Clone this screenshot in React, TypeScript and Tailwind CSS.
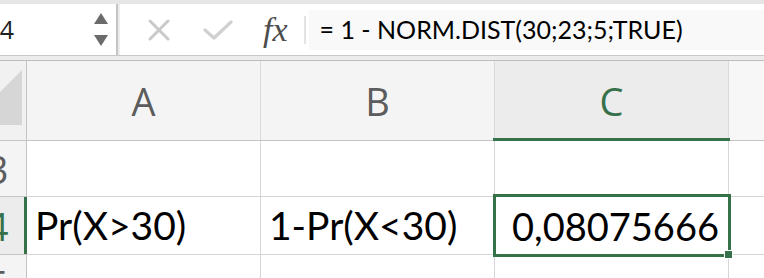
import React from "react";

const GREEN = "#37714a";

function HeaderCell({ label, active }: { label: string; active?: boolean }) {
  return (
    <div
      className={
        "relative flex h-[79px] items-center justify-center border-r border-[#dadada] " +
        (active ? "bg-[#ececec]" : "bg-[#f4f4f4]")
      }
    >
      <span
        className={"text-[38px] leading-none " + (active ? "text-[#37714a]" : "text-[#5c5c5c]")}
        style={{ fontFamily: '"Open Sans", sans-serif' }}
      >
        {label}
      </span>
      {active ? <div className="absolute bottom-[-1px] left-[-2px] right-[-2px] h-[3px] bg-[#37714a]" /> : null}
    </div>
  );
}

export default function App() {
  const cellFont = { fontFamily: 'Lato, "Open Sans", sans-serif' };
  const headFont = { fontFamily: '"Open Sans", sans-serif' };
  return (
    <div className="h-[278px] w-[764px] overflow-hidden bg-white">
      {/* top toolbar */}
      <div className="h-[4px] bg-[#e6e6e6]" />
      <div className="flex h-[51px]">
        <div className="flex w-[116px] items-center justify-between overflow-hidden bg-white">
          <span className="ml-[-16px] text-[25px] leading-none text-[#222]" style={headFont}>
            C4
          </span>
          <svg width="14" height="33" viewBox="0 0 14 33" className="mr-[8px]">
            <polygon points="7,0 14,11 0,11" fill="#6b6b6b" />
            <polygon points="0,22 14,22 7,33" fill="#6b6b6b" />
          </svg>
        </div>
        <div className="w-[2px] bg-[#c4c4c4]" />
        <div className="w-[2px] bg-[#ececec]" />
        <div className="flex flex-1 items-center bg-white pl-[28px]">
          <svg width="22" height="22" viewBox="0 0 22 22">
            <path d="M2 2 L20 20 M20 2 L2 20" stroke="#c9c9c9" strokeWidth="3" strokeLinecap="round" />
          </svg>
          <svg width="30" height="20" viewBox="0 0 30 20" className="ml-[33px]">
            <path d="M2 10 L11 18 L28 2" stroke="#d0d0d0" strokeWidth="3.2" fill="none" strokeLinecap="round" strokeLinejoin="round" />
          </svg>
          <span
            className="ml-[30px] text-[34px] italic leading-none text-[#4d4d4d]"
            style={{ fontFamily: '"Liberation Serif", serif' }}
          >
            fx
          </span>
          <div className="ml-[16px] h-[28px] w-[2px] bg-[#e3e3e3]" />
          <div className="ml-[3px] flex h-[40px] flex-1 items-center bg-[#f9f9f9] pl-[11px]">
            <span className="text-[25px] leading-none text-black" style={cellFont}>
              = 1 - NORM.DIST(30;23;5;TRUE)
            </span>
          </div>
        </div>
      </div>
      <div className="h-[1px] bg-[#c8c8c8]" />
      <div className="h-[4px] bg-[#ececec]" />
      <div className="h-[1px] bg-[#bdbdbd]" />

      {/* grid */}
      <div className="ml-[-31px] grid grid-cols-[58px_234px_234px_234px_200px]">
        {/* header row */}
        <div className="relative h-[80px] border-b border-r border-[#c4c4c4] bg-[#f1f1f1]">
          <svg width="58" height="79" viewBox="0 0 58 79" className="absolute left-0 top-0">
            <polygon points="53,9 53,64 -2,64" fill="#d6d6d6" />
          </svg>
        </div>
        <div className="border-b border-[#c4c4c4]">
          <HeaderCell label="A" />
        </div>
        <div className="border-b border-[#c4c4c4]">
          <HeaderCell label="B" />
        </div>
        <div className="border-b border-[#c4c4c4]">
          <HeaderCell label="C" active />
        </div>
        <div className="h-[80px] border-b border-[#c4c4c4] bg-[#f7f7f7]" />

        {/* row 3 */}
        <div className="flex h-[56px] items-center justify-center border-b border-r border-[#c4c4c4] bg-[#f4f4f4]">
          <span className="text-[38px] leading-none text-[#5c5c5c]" style={headFont}>
            3
          </span>
        </div>
        <div className="border-b border-r border-[#d6d6d6]" />
        <div className="border-b border-r border-[#d6d6d6]" />
        <div className="border-b border-r border-[#d6d6d6]" />
        <div className="border-b border-[#d6d6d6]" />

        {/* row 4 */}
        <div className="relative flex h-[58px] items-center justify-center border-b border-r border-[#c4c4c4] bg-[#ececec]">
          <span className="text-[38px] leading-none text-[#37714a]" style={headFont}>
            4
          </span>
          <div className="absolute bottom-0 right-[-1px] top-0 w-[3px] bg-[#37714a]" />
        </div>
        <div className="flex items-center border-b border-r border-[#d6d6d6] pl-[8px]">
          <span className="text-[39px] leading-none text-black" style={cellFont}>
            Pr(X&gt;30)
          </span>
        </div>
        <div className="flex items-center border-b border-r border-[#d6d6d6] pl-[8px]">
          <span className="text-[39px] leading-none text-black" style={cellFont}>
            1-Pr(X&lt;30)
          </span>
        </div>
        <div className="relative flex items-center justify-end border-b border-r border-[#d6d6d6] pr-[9px]">
          <span className="text-[38px] leading-none text-black" style={cellFont}>
            0,08075666
          </span>
          <div
            className="absolute bottom-[-3px] left-[-2px] right-[-3px] top-[-3px] border-[3px]"
            style={{ borderColor: GREEN }}
          />
          <div className="absolute bottom-[-5px] right-[-5px] h-[9px] w-[9px] border border-white bg-[#37714a]" />
        </div>
        <div className="border-b border-[#d6d6d6]" />

        {/* row 5 */}
        <div className="flex h-[58px] items-center justify-center border-r border-[#c4c4c4] bg-[#f4f4f4]">
          <span className="text-[38px] leading-none text-[#5c5c5c]" style={headFont}>
            5
          </span>
        </div>
        <div className="border-r border-[#d6d6d6]" />
        <div className="border-r border-[#d6d6d6]" />
        <div className="border-r border-[#d6d6d6]" />
        <div />
      </div>
    </div>
  );
}
